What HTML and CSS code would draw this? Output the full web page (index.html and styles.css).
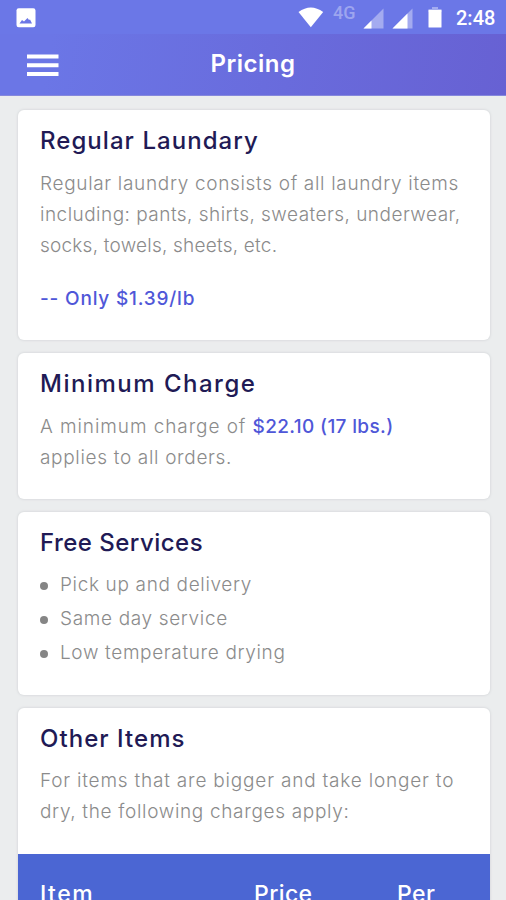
FILE: index.html
```html
<!DOCTYPE html>
<html lang="en">
<head>
    <meta charset="UTF-8">
    <meta name="viewport" content="width=device-width, initial-scale=1.0">
    <title>Pricing</title>
    <link rel="stylesheet" href="styles.css">
</head>
<body>
    <!-- Status bar -->
    <div class="status-bar">
        <svg class="icon-picture" width="20" height="20" viewBox="0 0 20 20">
            <rect x="0.5" y="0.3" width="19" height="19" rx="2.2" fill="#fff"/>
            <path d="M3.5 15.5 L6 12 L8 13.5 L11.5 10 L13 12 L14 11.5 L16 15.5 Z" fill="#6b76e6"/>
        </svg>
        <div class="status-icons">
            <svg class="icon-wifi" width="26" height="21" viewBox="0 0 26 21">
                <path d="M0.5 5 Q12.8 -4.2 25.2 5 L12.8 20.3 Z" fill="#fff"/>
            </svg>
            <span class="network">4G</span>
            <svg class="icon-signal" width="21" height="21" viewBox="0 0 21 21">
                <path d="M0.5 20.5 L20.5 0.5 V20.5 Z" fill="#a4abf0"/>
                <path d="M0.5 20.5 L8.5 12.5 V20.5 Z" fill="#fff"/>
            </svg>
            <svg class="icon-signal" width="21" height="21" viewBox="0 0 21 21">
                <path d="M0.5 20.5 L20.5 0.5 V20.5 Z" fill="#a4abf0"/>
                <path d="M0.5 20.5 L15.5 5.5 V20.5 Z" fill="#fff"/>
            </svg>
            <svg class="icon-battery" width="14" height="21" viewBox="0 0 14 21">
                <path d="M4 0 H10 V2 H13.5 V5 H0.5 V2 H4 Z" fill="#a4abf0"/>
                <rect x="0.5" y="3" width="13" height="17.5" rx="0.5" fill="#fff"/>
            </svg>
            <span class="time">2:48</span>
        </div>
    </div>

    <header>
        <svg class="menu" width="32" height="24" viewBox="0 0 32 24">
            <path d="M0 2.5 H31.5 M0 11.3 H31.5 M0 20 H31.5" stroke="#fff" stroke-width="4"/>
        </svg>
        <h1>Pricing</h1>
    </header>

    <main>
        <section class="card">
            <h2>Regular Laundary</h2>
            <p>Regular laundry consists of all laundry items<br><span class="snug">including: pants, shirts, sweaters, underwear,</span><br><span class="tight">socks, towels, sheets, etc.</span></p>
            <p class="price">-- Only $1.39/lb</p>
        </section>

        <section class="card">
            <h2 class="wide">Minimum Charge</h2>
            <p><span class="open">A minimum charge of </span><b>$22.10 (17 lbs.)</b><br>applies to all orders.</p>
        </section>

        <section class="card card-services">
            <h2 class="snug">Free Services</h2>
            <ul>
                <li>Pick up and delivery</li>
                <li>Same day service</li>
                <li>Low temperature drying</li>
            </ul>
        </section>

        <section class="card card-items">
            <h2>Other Items</h2>
            <p><span class="loose">For items that are bigger and take longer to</span><br>dry, the following charges apply:</p>
            <div class="table-head">
                <span class="wide">Item</span>
                <span>Price</span>
                <span>Per</span>
            </div>
        </section>
    </main>
</body>
</html>
```

FILE: styles.css
```css
* {
    box-sizing: border-box;
}
body {
    margin: 0;
    height: 900px;
    overflow: hidden;
    background: #ebedee;
    font-family: Inter, "Open Sans", sans-serif;
    color: #8b8b8b;
}
.status-bar {
    display: flex;
    justify-content: space-between;
    height: 34px;
    padding: 8px 12px 0 16px;
    background: #6b77e7;
    color: #fff;
}
.status-icons {
    display: flex;
    align-items: flex-start;
    font-family: Roboto, sans-serif;
}
.icon-wifi {
    margin-top: -1px;
}
.network {
    width: 23px;
    margin: -4px 7px 0 9px;
    color: #9da5ef;
    font-size: 18px;
    font-weight: 500;
    line-height: 18px;
}
.icon-signal {
    margin-right: 8px;
}
.icon-battery {
    margin: -1px 14px 0 7px;
}
.time {
    width: 38px;
    font-size: 20px;
    font-weight: 500;
    line-height: 21px;
    white-space: nowrap;
}
header {
    display: grid;
    grid-template-columns: 1fr auto 1fr;
    align-items: center;
    height: 62px;
    padding: 0 27px;
    background: linear-gradient(100deg, #6b76e6 10%, #6761d3);
    border-bottom: 1px solid #8588dc;
    color: #fff;
}
.menu {
    margin-top: 3px;
}
h1 {
    margin: 0 0 2px;
    font-size: 24px;
    font-weight: 600;
    letter-spacing: 0.5px;
    line-height: 58px;
}
main {
    display: flex;
    flex-direction: column;
    gap: 13px;
    padding: 14px 16px 0 18px;
}
.card {
    padding: 14px 22px 26px;
    background: #fff;
    border-radius: 6px;
    box-shadow: 0 0 2px 1px #dcdee0;
}
h2 {
    margin: 0 0 10px;
    color: #211a55;
    font-size: 24px;
    font-weight: 500;
    letter-spacing: 1.05px;
    line-height: 34px;
}
p {
    margin: 0;
    font-size: 19px;
    font-weight: 300;
    letter-spacing: 0.67px;
    line-height: 31px;
    white-space: nowrap;
}
.price,
b {
    color: #4f57d8;
    font-weight: 500;
}
.price {
    margin-top: 22px;
    letter-spacing: 0.8px;
}
b {
    letter-spacing: 0.35px;
}
/* letter spacing steps */
.tight {
    letter-spacing: 0.22px;
}
.snug {
    letter-spacing: 0.47px;
}
.loose {
    letter-spacing: 0.8px;
}
.open {
    letter-spacing: 0.92px;
}
.wide {
    letter-spacing: 1.5px;
}
.card-services {
    padding-bottom: 25px;
}
.card-services h2 {
    margin-bottom: 8px;
}
ul {
    margin: 0;
    padding: 0;
    list-style: none;
}
li {
    display: flex;
    align-items: center;
    gap: 12px;
    font-size: 19px;
    font-weight: 300;
    letter-spacing: 0.65px;
    line-height: 34px;
}
li::before {
    content: "";
    width: 8px;
    height: 8px;
    margin-top: 2px;
    border-radius: 50%;
    background: #858585;
}
.card-items {
    padding-bottom: 0;
}
.card-items p {
    margin-top: -1px;
}
.table-head {
    display: grid;
    grid-template-columns: 214px 143px 1fr;
    margin: 27px -22px 0;
    padding: 0 0 0 22px;
    background: #4b66d3;
    color: #fff;
    font-size: 23px;
    font-weight: 500;
    letter-spacing: 0.4px;
    line-height: 80px;
}
```
